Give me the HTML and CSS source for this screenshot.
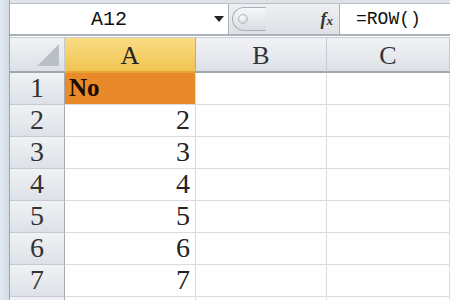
FILE: index.html
```html
<!DOCTYPE html>
<html lang="en">
<head>
  <meta charset="UTF-8" />
  <title>Sheet</title>
  <link rel="stylesheet" href="styles.css">
</head>
<body>
  <div class="app">
    <div class="edge"></div>
    <div class="main">
      <div class="topbar"></div>
      <div class="formula-row">
        <div class="namebox">
          <span class="name">A12</span>
          <span class="arrow"></span>
        </div>
        <div class="ctrl">
          <span class="pill"><span class="dot"></span></span>
          <span class="fx"><i>f</i><small>x</small></span>
        </div>
        <div class="formula">=ROW()</div>
      </div>
      <div class="sep"></div>

      <div class="sheet">
        <div class="corner"><span class="tri"></span></div>
        <div class="colhead active">A</div>
        <div class="colhead">B</div>
        <div class="colhead">C</div>

        <div class="rowhead">1</div><div class="cell title">No</div><div class="cell"></div><div class="cell"></div>
        <div class="rowhead">2</div><div class="cell num">2</div><div class="cell"></div><div class="cell"></div>
        <div class="rowhead">3</div><div class="cell num">3</div><div class="cell"></div><div class="cell"></div>
        <div class="rowhead">4</div><div class="cell num">4</div><div class="cell"></div><div class="cell"></div>
        <div class="rowhead">5</div><div class="cell num">5</div><div class="cell"></div><div class="cell"></div>
        <div class="rowhead">6</div><div class="cell num">6</div><div class="cell"></div><div class="cell"></div>
        <div class="rowhead">7</div><div class="cell num">7</div><div class="cell"></div><div class="cell"></div>
        <div class="rowhead"></div><div class="cell"></div><div class="cell"></div><div class="cell"></div>
      </div>
    </div>
  </div>
</body>
</html>
```

FILE: styles.css
```css
* { margin: 0; padding: 0; box-sizing: border-box; }
html, body { width: 450px; height: 300px; overflow: hidden; background: #fff; }
body { font-family: "Liberation Serif", serif; color: #222; }

.app { display: flex; height: 300px; overflow: hidden; }
.edge {
  width: 10px;
  flex-shrink: 0;
  background: linear-gradient(to right, #e3e9f1, #d2dbe6);
  border-right: 1px solid #9aa5b3;
}
.main { flex: 1; display: flex; flex-direction: column; }
.main > * { flex-shrink: 0; }

.topbar { height: 4px; background: #dfe3e8; border-bottom: 1px solid #b9c0c8; }

.formula-row {
  display: flex;
  height: 30px;
  background: #e6e9ed;
}
.namebox {
  width: 219px;
  background: #fff;
  border-right: 1px solid #a8b0ba;
  display: flex;
  align-items: center;
}
.name {
  flex: 1;
  text-align: center;
  font-family: "Liberation Mono", monospace;
  font-size: 20px;
  color: #111;
  padding-right: 6px;
}
.arrow {
  width: 0; height: 0;
  border-left: 5px solid transparent;
  border-right: 5px solid transparent;
  border-top: 6px solid #222;
  margin-right: 4px;
}
.ctrl {
  width: 111px;
  display: flex;
  align-items: center;
  justify-content: space-between;
  padding: 0 6px 0 3px;
  background: linear-gradient(#eef0f3, #dde1e6);
  border-right: 1px solid #a8b0ba;
}
.pill {
  width: 34px; height: 24px;
  border: 1px solid #a9b0b8;
  border-right: none;
  border-radius: 12px 0 0 12px;
  background: linear-gradient(#f6f7f8, #d9dde2);
  display: flex;
  align-items: center;
  padding-left: 5px;
}
.dot {
  width: 10px; height: 10px; border-radius: 50%;
  background: radial-gradient(circle at 40% 35%, #ffffff, #c5cbd2);
  border: 1px solid #b5bbc3;
}
.fx {
  font-family: "Liberation Serif", serif;
  font-weight: bold;
  font-style: italic;
  font-size: 18px;
  color: #333;
}
.fx small { font-size: 13px; }
.formula {
  flex: 1;
  background: #fff;
  font-family: "Liberation Mono", monospace;
  font-size: 18px;
  color: #111;
  display: flex;
  align-items: center;
  padding-left: 16px;
}

.sep {
  height: 4px;
  background: #fff;
  border-top: 2px solid #a9b1ba;
  border-bottom: 1px solid #c9ced4;
}

.sheet {
  display: grid;
  grid-template-columns: 55px 131px 131px 1fr;
  grid-template-rows: 35px repeat(8, 32px);
  line-height: 1;
}
.corner, .colhead, .rowhead {
  background: linear-gradient(#f0f2f5, #dde1e7);
  border-right: 1px solid #c4cad1;
  border-bottom: 1px solid #c4cad1;
}
.corner { position: relative; border-bottom: 2px solid #9ea6b0; }
.tri {
  position: absolute;
  right: 5px; bottom: 5px;
  width: 22px; height: 22px;
  background: #b9bfc6;
  clip-path: polygon(100% 0, 100% 100%, 0 100%);
}
.colhead {
  display: flex; align-items: center; justify-content: center;
  font-size: 26px;
  color: #333;
  border-bottom: 2px solid #9ea6b0;
  padding-top: 2px;
}
.colhead.active {
  background: linear-gradient(#f9dc83, #f1c453);
  border-bottom: 2px solid #e7a431;
  border-right: 1px solid #d9a83f;
  color: #222;
}
.rowhead {
  display: flex; align-items: flex-end; justify-content: center;
  font-size: 28px;
  color: #333;
  border-right: 1px solid #a3abb5;
  padding-bottom: 2px;
}
.cell {
  border-right: 1px solid #dadcdf;
  border-bottom: 1px solid #dadcdf;
  font-size: 28px;
  display: flex; align-items: flex-end;
  padding-bottom: 2px;
}
.cell.num { justify-content: flex-end; padding-right: 5px; }
.cell.title {
  background: #e98a2a;
  font-weight: bold;
  font-size: 25px;
  padding-left: 4px;
  padding-bottom: 4px;
  color: #1a0a00;
}
```
